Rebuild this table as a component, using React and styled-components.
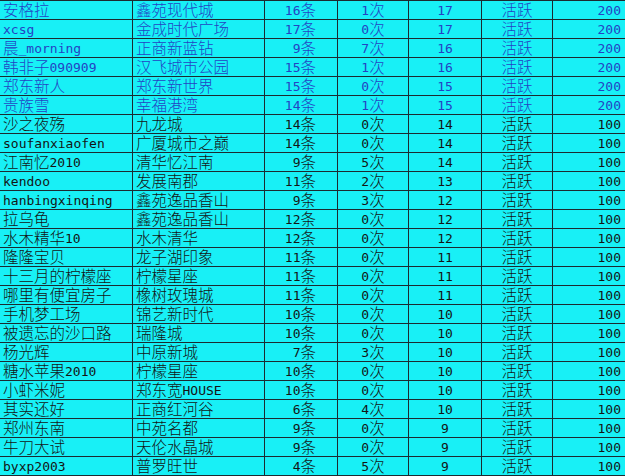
import React from "react";
import styled, { createGlobalStyle } from "styled-components";

const Global = createGlobalStyle`
  html, body { margin: 0; padding: 0; background: #18f0f6; overflow: hidden; }
`;

const Sheet = styled.div`
  display: grid;
  grid-template-columns: 133px 132px 73px 71px 73px 71px 73px;
  grid-auto-rows: 19px;
  border-top: 1px solid #1c2a30;
  background: #18f0f6;
  width: 640px;
  font-family: "Noto Sans CJK SC", sans-serif;
  font-size: 15.5px;
  font-weight: 300;
`;

const Cell = styled.div`
  box-sizing: border-box;
  border-right: 1px solid #1c2a30;
  border-bottom: 1px solid #1c2a30;
  color: ${(p) => (p.$hot ? "#2443c4" : "#141414")};
  text-align: ${(p) => p.$align || "left"};
  padding: ${(p) => p.$pad || "0 0 0 3px"};
  white-space: nowrap;
  line-height: 17px;
`;

const Latin = styled.span`
  font-family: "DejaVu Sans Mono", "Liberation Mono", monospace;
  font-size: 13px;
  font-weight: 400;
  vertical-align: 1px;
`;

function Txt({ s }) {
  const parts = String(s).match(/[\x00-\x7f]+|[^\x00-\x7f]+/g) || [];
  return parts.map((p, i) =>
    /^[\x00-\x7f]+$/.test(p) ? <Latin key={i}>{p}</Latin> : <span key={i}>{p}</span>
  );
}

const rows = [
  ["安格拉", "鑫苑现代城", "16条", "1次", "17", "200"],
  ["xcsg", "金成时代广场", "17条", "0次", "17", "200"],
  ["晨_morning", "正商新蓝钻", "9条", "7次", "16", "200"],
  ["韩非子090909", "汉飞城市公园", "15条", "1次", "16", "200"],
  ["郑东新人", "郑东新世界", "15条", "0次", "15", "200"],
  ["贵族雪", "幸福港湾", "14条", "1次", "15", "200"],
  ["沙之夜殇", "九龙城", "14条", "0次", "14", "100"],
  ["soufanxiaofen", "广厦城市之巅", "14条", "0次", "14", "100"],
  ["江南忆2010", "清华忆江南", "9条", "5次", "14", "100"],
  ["kendoo", "发展南郡", "11条", "2次", "13", "100"],
  ["hanbingxinqing", "鑫苑逸品香山", "9条", "3次", "12", "100"],
  ["拉乌龟", "鑫苑逸品香山", "12条", "0次", "12", "100"],
  ["水木精华10", "水木清华", "12条", "0次", "12", "100"],
  ["隆隆宝贝", "龙子湖印象", "11条", "0次", "11", "100"],
  ["十三月的柠檬座", "柠檬星座", "11条", "0次", "11", "100"],
  ["哪里有便宜房子", "橡树玫瑰城", "11条", "0次", "11", "100"],
  ["手机梦工场", "锦艺新时代", "10条", "0次", "10", "100"],
  ["被遗忘的沙口路", "瑞隆城", "10条", "0次", "10", "100"],
  ["杨光辉", "中原新城", "7条", "3次", "10", "100"],
  ["糖水苹果2010", "柠檬星座", "10条", "0次", "10", "100"],
  ["小虾米妮", "郑东宽HOUSE", "10条", "0次", "10", "100"],
  ["其实还好", "正商红河谷", "6条", "4次", "10", "100"],
  ["郑州东南", "中苑名都", "9条", "0次", "9", "100"],
  ["牛刀大试", "天伦水晶城", "9条", "0次", "9", "100"],
  ["byxp2003", "普罗旺世", "4条", "5次", "9", "100"],
];

export default function App() {
  return (
    <>
      <Global />
      <Sheet>
        {rows.map((r, i) => {
          const hot = i < 6;
          return (
            <React.Fragment key={i}>
              <Cell $hot={hot}><Txt s={r[0]} /></Cell>
              <Cell $hot={hot}><Txt s={r[1]} /></Cell>
              <Cell $hot={hot} $align="right" $pad="0 21px 0 0"><Txt s={r[2]} /></Cell>
              <Cell $hot={hot} $align="center" $pad="0"><Txt s={r[3]} /></Cell>
              <Cell $hot={hot} $align="center" $pad="0"><Txt s={r[4]} /></Cell>
              <Cell $hot={hot} $align="center" $pad="0"><Txt s="活跃" /></Cell>
              <Cell $hot={hot} $align="right" $pad="0 4px 0 0"><Txt s={r[5]} /></Cell>
            </React.Fragment>
          );
        })}
      </Sheet>
    </>
  );
}
